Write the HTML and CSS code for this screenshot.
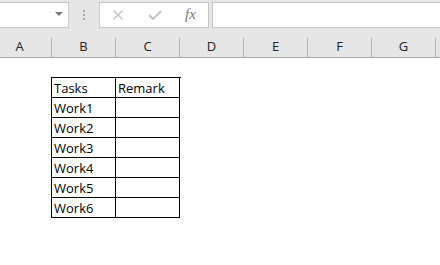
FILE: index.html
```html
<!DOCTYPE html>
<html>
<head>
<meta charset="utf-8">
<link rel="stylesheet" href="styles.css">
</head>
<body>
<div class="toolbar">
  <div class="namebox">
    <svg class="arrow" width="8" height="4" viewBox="0 0 8 4"><polygon points="0,0 8,0 4,4" fill="#7b7b7b"/></svg>
  </div>
  <div class="grip"><span></span><span></span><span></span></div>
  <div class="fbuttons">
    <svg class="ico" width="12" height="10" viewBox="0 0 12 10"><path d="M1.5 0.5 L10.5 9.5 M10.5 0.5 L1.5 9.5" stroke="#bdbdbd" stroke-width="1.3" fill="none"/></svg>
    <svg class="ico" width="14" height="10" viewBox="0 0 14 10"><path d="M1 5 L5 9 L13 1" stroke="#c4c4c4" stroke-width="2" fill="none"/></svg>
    <span class="fx">fx</span>
  </div>
  <div class="finput"></div>
</div>
<div class="colheads">
  <div class="ch">A</div><div class="ch">B</div><div class="ch">C</div><div class="ch">D</div><div class="ch">E</div><div class="ch">F</div><div class="ch">G</div><div class="ch"></div>
</div>
<div class="sheet">
  <div class="grid">
    <div class="cell">Tasks</div><div class="cell">Remark</div>
    <div class="cell">Work1</div><div class="cell"></div>
    <div class="cell">Work2</div><div class="cell"></div>
    <div class="cell">Work3</div><div class="cell"></div>
    <div class="cell">Work4</div><div class="cell"></div>
    <div class="cell">Work5</div><div class="cell"></div>
    <div class="cell">Work6</div><div class="cell"></div>
  </div>
</div>
</body>
</html>
```
FILE: styles.css
```css
html, body {
  margin: 0;
  padding: 0;
  background: #ffffff;
  overflow: hidden;
}
body {
  width: 440px;
  height: 265px;
  font-family: "Open Sans", "Noto Sans", sans-serif;
}
.toolbar {
  height: 38px;
  background: #e6e6e6;
  display: flex;
  align-items: flex-start;
  padding-top: 2px;
  box-sizing: border-box;
}
.namebox {
  margin-left: -1px;
  width: 70px;
  height: 26px;
  box-sizing: border-box;
  background: #fff;
  border: 1px solid #c6c6c6;
  display: flex;
  align-items: flex-start;
  justify-content: flex-end;
}
.arrow {
  margin-top: 9px;
  margin-right: 5px;
}
.grip {
  width: 30px;
  display: flex;
  flex-direction: column;
  align-items: center;
  gap: 2px;
  padding-top: 8px;
}
.grip span {
  width: 2px;
  height: 2px;
  background: #ababab;
}
.fbuttons {
  width: 110px;
  height: 26px;
  box-sizing: border-box;
  background: #fff;
  border: 1px solid #c6c6c6;
  display: flex;
  align-items: center;
  padding-left: 12px;
}
.fbuttons .ico:nth-child(1) { margin-right: 24px; }
.fbuttons .ico:nth-child(2) { margin-right: 23px; }
.fx {
  font-family: "Liberation Serif", "DejaVu Serif", serif;
  font-style: italic;
  font-size: 15px;
  color: #7a7a7a;
  line-height: 1;
  margin-top: -2px;
}
.finput {
  margin-left: 3px;
  flex: 1;
  height: 26px;
  box-sizing: border-box;
  background: #fff;
  border: 1px solid #c6c6c6;
  margin-right: -2px;
}
.colheads {
  display: flex;
  margin-left: -12px;
  height: 20px;
  box-sizing: border-box;
  background: #e6e6e6;
  border-bottom: 1px solid #a8a8a8;
}
.ch {
  flex: 0 0 64px;
  box-sizing: border-box;
  border-right: 1px solid #b4b4b4;
  text-align: center;
  font-size: 13px;
  line-height: 16px;
  height: 19px;
  color: #222;
}
.sheet {
  padding-top: 19px;
  padding-left: 51px;
}
.grid {
  display: grid;
  grid-template-columns: 64px 64px;
  width: 129px;
  border-top: 1px solid #000;
  border-left: 1px solid #000;
}
.cell {
  box-sizing: border-box;
  height: 20px;
  border-right: 1px solid #000;
  border-bottom: 1px solid #000;
  padding: 1px 0 0 2px;
  font-size: 13px;
  line-height: 18px;
  color: #000;
  white-space: nowrap;
}
```
